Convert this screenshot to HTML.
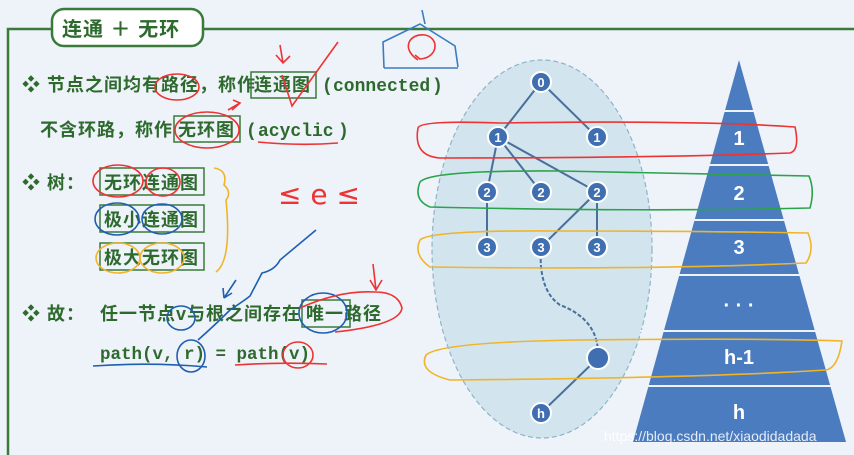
<!DOCTYPE html>
<html><head><meta charset="utf-8"><style>
html,body{margin:0;padding:0;width:854px;height:455px;overflow:hidden;background:#eef3f9}
svg{position:absolute;left:0;top:0}
.t{font-family:"Liberation Sans","Noto Sans CJK SC",sans-serif;font-weight:bold;fill:#2e6a2e;font-size:18px;letter-spacing:1px}
.m{font-family:"Liberation Mono","Noto Sans CJK SC",monospace;font-weight:bold;fill:#2e6a2e;font-size:18px}
.n{font-family:"Liberation Sans",sans-serif;font-weight:bold;fill:#fff;font-size:13px;text-anchor:middle}
.p{font-family:"Liberation Sans",sans-serif;font-weight:bold;fill:#fff;font-size:20px;text-anchor:middle}
</style></head><body>
<svg width="854" height="455" viewBox="0 0 854 455">
<path d="M8 455 V29 H854" stroke="#3a7a3a" stroke-width="2.5" fill="none"/>
<rect x="52" y="9" width="151" height="37" rx="12" fill="#fff" stroke="#3a7a3a" stroke-width="2.5"/>
<text x="62" y="36" class="t" style="font-size:20px">连通 ＋ 无环</text>
<path d="M384 68 L383 42 L420 24 L455 46 L458 67 M384 68 H458 M422 10 L425 24" stroke="#3b7cc0" stroke-width="1.6" fill="none"/>
<path d="M418 60 C400 48 410 33 425 35 C440 38 438 58 420 59 L415 55" stroke="#e33" stroke-width="1.6" fill="none"/>
<text x="22" y="91" class="t">❖ 节点之间均有路径，称作</text>
<rect x="251" y="72" width="65" height="26" fill="none" stroke="#3a7a3a" stroke-width="1.5"/>
<text x="254" y="91" class="t">连通图</text>
<text x="322" y="91" class="m">(</text><text x="333" y="91" class="m">connected</text><text x="432" y="91" class="m">)</text>
<text x="40" y="136" class="t">不含环路，称作</text>
<rect x="174" y="116" width="66" height="26" fill="none" stroke="#3a7a3a" stroke-width="1.5"/>
<text x="178" y="136" class="t">无环图</text>
<text x="246" y="136" class="m">(</text><text x="258" y="136" class="m">acyclic</text><text x="338" y="136" class="m">)</text>
<text x="22" y="189" class="t">❖ 树：</text>
<rect x="100" y="168" width="104" height="27" fill="none" stroke="#3a7a3a" stroke-width="1.5"/>
<text x="104" y="189" class="t">无环连通图</text>
<rect x="100" y="205" width="104" height="27" fill="none" stroke="#3a7a3a" stroke-width="1.5"/>
<text x="104" y="226" class="t">极小连通图</text>
<rect x="100" y="243" width="104" height="27" fill="none" stroke="#3a7a3a" stroke-width="1.5"/>
<text x="104" y="264" class="t">极大无环图</text>
<text x="22" y="320" class="t">❖ 故：</text>
<text x="100" y="320" class="t">任一节点v与根之间存在</text>
<rect x="302" y="300" width="48" height="27" fill="none" stroke="#3a7a3a" stroke-width="1.5"/>
<text x="306" y="320" class="t">唯一路径</text>
<text x="100" y="359" class="m" style="font-size:17.5px">path(v, r) = path(v)</text>
<text x="278" y="204" style="font-family:'DejaVu Sans',sans-serif;font-size:28px;fill:#e33">≤ e ≤</text>
<g fill="none" stroke-width="1.6">
<ellipse cx="177" cy="87" rx="22" ry="13" stroke="#e33"/>
<path d="M280 45 L283 63 M276 55 L283 63 L290 56 M282 75 L292 106 L338 42" stroke="#e33"/>
<ellipse cx="207" cy="130" rx="32" ry="18" stroke="#e33"/>
<path d="M228 110 L240 103 M233 100 L240 103 L232 110" stroke="#e33"/>
<path d="M258 142 Q300 146 338 143" stroke="#e33"/>
<ellipse cx="118" cy="181" rx="25" ry="16" stroke="#e33"/>
<ellipse cx="163" cy="182" rx="17" ry="14" stroke="#e33"/>
<ellipse cx="117" cy="219" rx="22" ry="16" stroke="#1e5fb0"/>
<ellipse cx="162" cy="219" rx="20" ry="15" stroke="#1e5fb0"/>
<ellipse cx="118" cy="258" rx="22" ry="15" stroke="#f0b429"/>
<ellipse cx="162" cy="258" rx="22" ry="15" stroke="#f0b429"/>
<path d="M214 168 Q228 170 224 185 Q232 192 226 200 Q232 260 216 272" stroke="#f0b429"/>
<ellipse cx="181" cy="318" rx="14" ry="12" stroke="#1e5fb0"/>
<path d="M236 280 L224 298 M224 298 L223 288 M224 298 L232 293" stroke="#1e5fb0"/>
<path d="M198 340 Q215 325 230 310 Q245 300 250 296 L262 273 Q275 270 280 260 L316 230" stroke="#1e5fb0"/>
<ellipse cx="323" cy="313" rx="24" ry="20" stroke="#1e5fb0"/>
<path d="M335 332 Q400 325 402 308 Q398 292 375 292 Q340 290 300 308 M373 264 L376 290 M370 280 L376 290 L382 280" stroke="#e33"/>
<ellipse cx="191" cy="356" rx="14" ry="16" stroke="#1e5fb0"/>
<path d="M93 366 Q150 362 207 367" stroke="#1e5fb0"/>
<ellipse cx="298" cy="355" rx="15" ry="13" stroke="#e33"/>
<path d="M235 365 Q280 362 327 364" stroke="#e33"/>
</g>
<ellipse cx="542" cy="249" rx="110" ry="189" fill="#d2e5ee" stroke="#8fb3c8" stroke-width="1.2" stroke-dasharray="5 3"/>
<g stroke="#4a6f9a" stroke-width="2" fill="none">
<path d="M541 82 L498 137 M541 82 L597 137 M498 137 L487 192 M498 137 L541 192 M498 137 L597 192 M487 192 L487 247 M597 192 L541 247 M597 192 L597 247 M598 358 L541 413"/>
<path d="M541 247 Q538 290 560 305 Q600 320 598 358" stroke-dasharray="4 2"/>
</g>
<g fill="#3f6fb0" stroke="#fff" stroke-width="2">
<circle cx="541" cy="82" r="10"/><circle cx="498" cy="137" r="10"/><circle cx="597" cy="137" r="10"/>
<circle cx="487" cy="192" r="10"/><circle cx="541" cy="192" r="10"/><circle cx="597" cy="192" r="10"/>
<circle cx="487" cy="247" r="10"/><circle cx="541" cy="247" r="10"/><circle cx="597" cy="247" r="10"/>
<circle cx="598" cy="358" r="11"/><circle cx="541" cy="413" r="10"/>
</g>
<g class="n">
<text x="541" y="87">0</text><text x="498" y="142">1</text><text x="597" y="142">1</text>
<text x="487" y="197">2</text><text x="541" y="197">2</text><text x="597" y="197">2</text>
<text x="487" y="252">3</text><text x="541" y="252">3</text><text x="597" y="252">3</text>
<text x="541" y="418">h</text>
</g>
<polygon points="739,60 633,442 846,442" fill="#4a7cbf"/>
<g stroke="#eef3f9" stroke-width="2">
<line x1="690" y1="111" x2="790" y2="111"/><line x1="690" y1="165" x2="790" y2="165"/>
<line x1="670" y1="220" x2="810" y2="220"/><line x1="660" y1="275" x2="820" y2="275"/>
<line x1="640" y1="331" x2="840" y2="331"/><line x1="630" y1="386" x2="850" y2="386"/>
</g>
<g class="p">
<text x="739" y="145">1</text><text x="739" y="200">2</text><text x="739" y="254">3</text>
<text x="739" y="312">· · ·</text><text x="739" y="364">h-1</text><text x="739" y="419">h</text>
</g>
<g fill="none" stroke-width="1.6">
<path d="M418 128 Q420 120 500 123 Q700 120 795 127 Q800 150 790 153 Q650 158 440 158 Q413 156 418 128" stroke="#e33"/>
<path d="M420 182 Q430 170 560 171 Q700 174 809 176 Q815 190 810 208 Q650 212 430 207 Q413 200 420 182" stroke="#2aa44a"/>
<path d="M420 240 Q430 230 560 231 Q700 231 808 233 Q815 250 806 263 Q650 270 430 267 Q413 255 420 240" stroke="#f0b429"/>
<path d="M426 355 Q440 342 580 340 Q760 338 842 341 Q838 368 826 370 Q700 378 450 380 Q418 372 426 355" stroke="#f0b429"/>
</g>
<text x="604" y="441" style="font-family:'Liberation Sans',sans-serif;font-size:14px;fill:#fff;opacity:.85">https://blog.csdn.net/xiaodidadada</text>
</svg>
</body></html>
